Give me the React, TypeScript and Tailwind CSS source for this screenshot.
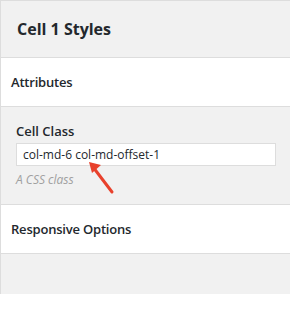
export default function App() {
  return (
    <div className="relative h-[330px] w-[290px] bg-white text-[#23282d]" style={{ fontFamily: '"Open Sans", "Noto Sans", sans-serif' }}>
      <div className="border-l border-t border-[#dddddd]">
        <div className="flex h-[57px] items-center border-b border-[#dddddd] bg-[#f1f1f1] pl-[16px]">
          <h2 className="text-[16px] font-bold leading-none">Cell 1 Styles</h2>
        </div>
        <div className="flex h-[49px] items-center border-b border-[#dddddd] bg-white pl-[10px]">
          <h3 className="text-[13px] font-semibold leading-none tracking-[-0.2px]">Attributes</h3>
        </div>
        <div className="h-[98px] border-b border-[#dddddd] bg-[#f1f1f1] px-[15px] pt-[15px]">
          <label className="block text-[13px] font-semibold leading-[19px]">Cell Class</label>
          <div className="mt-[2px] flex h-[23px] w-[260px] items-center border border-[#dddddd] bg-white pl-[6px] text-[12px]">
            col-md-6 col-md-offset-1
          </div>
          <p className="mt-[5px] text-[12px] italic leading-[18px] text-[#a0a0a0]">A CSS class</p>
        </div>
        <div className="flex h-[49px] items-center border-b border-[#dddddd] bg-white pl-[10px]">
          <h3 className="text-[13px] font-semibold leading-none tracking-[-0.2px]">Responsive Options</h3>
        </div>
        <div className="h-[40px] bg-[#f1f1f1]"></div>
      </div>
      <svg className="absolute left-[84px] top-[158px]" width="32" height="38" viewBox="0 0 32 38">
        <line x1="28" y1="34" x2="9" y2="9" stroke="#e8412c" strokeWidth="3" strokeLinecap="round" />
        <polygon points="5,4 17,7 8,15" fill="#e8412c" />
      </svg>
    </div>
  );
}
